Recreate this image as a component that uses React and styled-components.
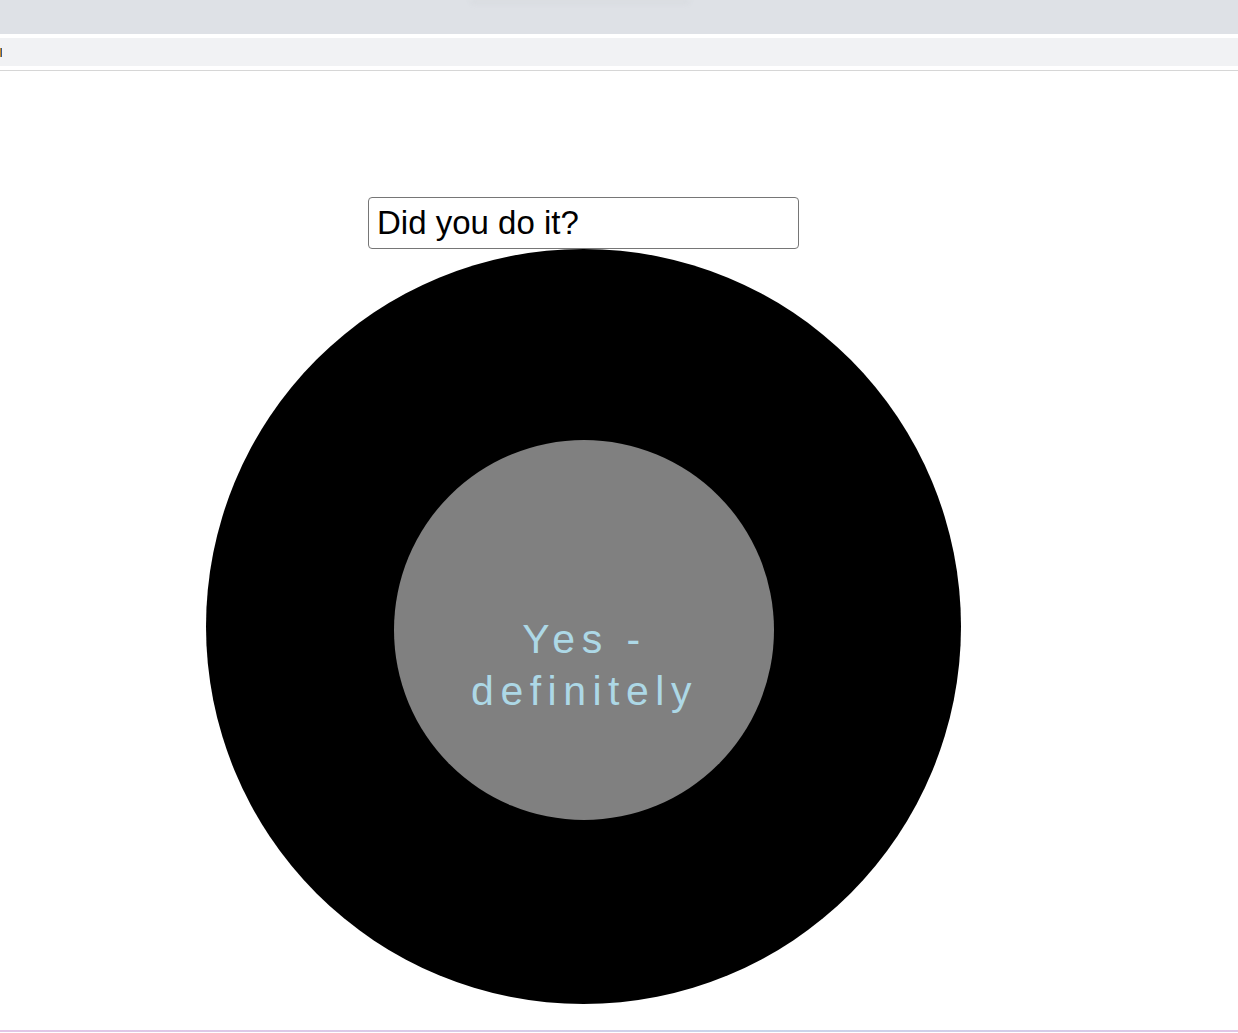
import React from "react";
import styled, { createGlobalStyle } from "styled-components";

const Global = createGlobalStyle`
  html, body { margin: 0; padding: 0; background: #ffffff; }
  body { font-family: "Liberation Sans", Arial, sans-serif; overflow: hidden; }
`;

const Page = styled.div`
  width: 1238px;
  height: 1033px;
  display: flex;
  flex-direction: column;
  position: relative;
`;

const TopBar = styled.div`
  height: 34px;
  background: #dee1e6;
  position: relative;
  flex-shrink: 0;
`;

const TabShadow = styled.div`
  position: absolute;
  left: 470px;
  top: 0;
  width: 220px;
  height: 4px;
  border-radius: 0 0 8px 8px;
  background: #d8dbe0;
  filter: blur(2px);
`;

const Gap = styled.div`
  height: ${(p) => p.$h}px;
  flex-shrink: 0;
`;

const SubBar = styled.div`
  height: 28px;
  background: #f1f2f4;
  display: flex;
  align-items: center;
  flex-shrink: 0;
`;

const Caret = styled.span`
  display: block;
  width: 2px;
  height: 9px;
  margin-top: 1px;
  background: linear-gradient(90deg, #c9892a 50%, #3a5b8c 50%);
`;

const Rule = styled.div`
  height: 1px;
  background: #d6d6d6;
  flex-shrink: 0;
`;

const Content = styled.main`
  width: 1167px;
  display: flex;
  flex-direction: column;
  align-items: center;
  padding-top: 126px;
`;

const Question = styled.input`
  box-sizing: border-box;
  width: 431px;
  height: 52px;
  border: 1px solid #767676;
  border-radius: 4px;
  padding: 0 8px;
  font-family: "Liberation Sans", Arial, sans-serif;
  font-size: 33px;
  color: #000;
  outline: none;
  background: #fff;
`;

const Outer = styled.div`
  box-sizing: border-box;
  width: 755px;
  height: 755px;
  border-radius: 50%;
  background: #000;
  display: flex;
  align-items: center;
  justify-content: center;
  padding-top: 6px;
`;

const Inner = styled.div`
  width: 380px;
  height: 380px;
  border-radius: 50%;
  background: #808080;
  display: flex;
  align-items: center;
  justify-content: center;
`;

const Answer = styled.div`
  width: 250px;
  text-align: center;
  color: #add8e6;
  font-family: "Liberation Sans", Arial, sans-serif;
  font-size: 41px;
  line-height: 52px;
  letter-spacing: 6.5px;
  padding-left: 2px;
  margin-top: 70px;
`;

const BottomLine = styled.div`
  position: absolute;
  left: 0;
  right: 0;
  bottom: 1px;
  height: 2px;
  background: linear-gradient(90deg, #e2c6e6 0%, #d9cbe8 40%, #c9d5ea 60%, #d6cbe8 85%, #e2c6e6 100%);
`;

export default function App() {
  return (
    <>
      <Global />
      <Page>
        <TopBar>
          <TabShadow />
        </TopBar>
        <Gap $h={4} />
        <SubBar>
          <Caret />
        </SubBar>
        <Gap $h={4} />
        <Rule />
        <Content>
          <Question defaultValue="Did you do it?" />
          <Outer>
            <Inner>
              <Answer>Yes - definitely</Answer>
            </Inner>
          </Outer>
        </Content>
        <BottomLine />
      </Page>
    </>
  );
}
